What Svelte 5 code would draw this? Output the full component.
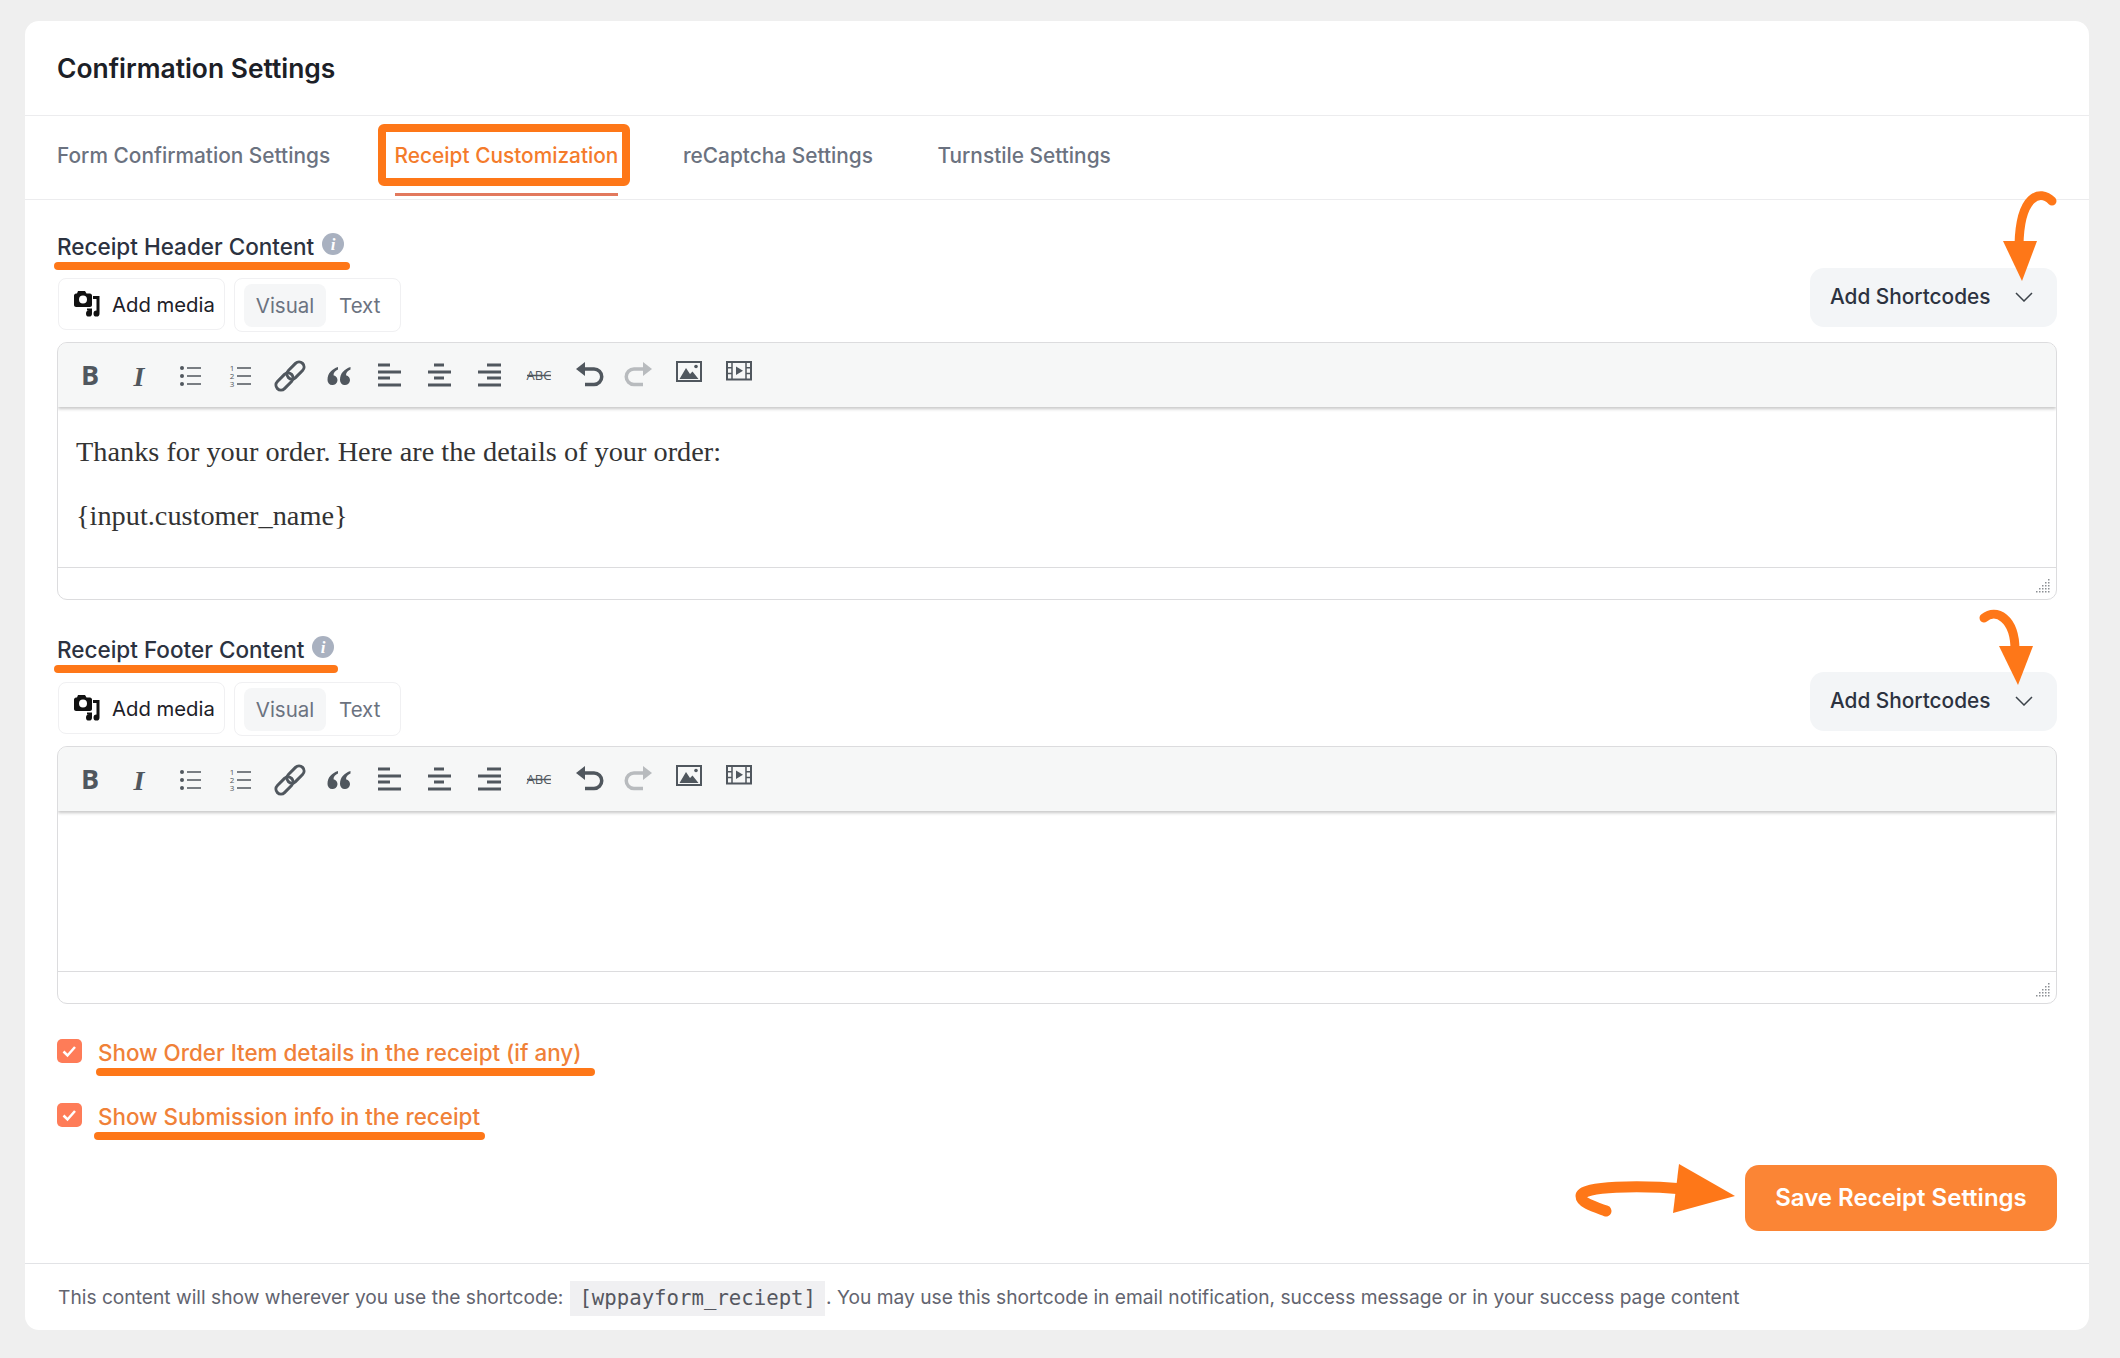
<script>
  const tabs = ["Form Confirmation Settings", "Receipt Customization", "reCaptcha Settings", "Turnstile Settings"];

  // little dotted triangle of the editor's resize handle
  const grip = [];
  for (let row = 0; row < 5; row++) {
    for (let col = 4 - row; col < 5; col++) {
      grip.push({ x: col * 3 + 1, y: row * 3 + 1 });
    }
  }
</script>

{#snippet toolbar()}
  <div class="toolbar">
    <span class="tool"><svg viewBox="0 0 32 32"><text x="16" y="25" text-anchor="middle" class="t-bold">B</text></svg></span>
    <span class="tool"><svg viewBox="0 0 32 32"><text x="15" y="26" text-anchor="middle" class="t-ital">I</text></svg></span>
    <span class="tool">
      <svg viewBox="0 0 32 32">
        <circle cx="8" cy="8" r="2" /><circle cx="8" cy="16" r="2" /><circle cx="8" cy="24" r="2" />
        <path class="line" d="M13 8H27M13 16H27M13 24H27" />
      </svg>
    </span>
    <span class="tool">
      <svg viewBox="0 0 32 32">
        <text x="8" y="11" text-anchor="middle" class="t-num">1</text>
        <text x="8" y="19" text-anchor="middle" class="t-num">2</text>
        <text x="8" y="27" text-anchor="middle" class="t-num">3</text>
        <path class="line" d="M13 8H27M13 16H27M13 24H27" />
      </svg>
    </span>
    <span class="tool">
      <svg viewBox="0 0 32 32">
        <g class="chain">
          <rect x="16.500" y="0.500" width="10" height="20" rx="5" transform="rotate(45 21.500 10.500)" />
          <rect x="5.500" y="11.500" width="10" height="20" rx="5" transform="rotate(45 10.500 21.500)" />
        </g>
      </svg>
    </span>
    <span class="tool">
      <svg viewBox="0 0 32 32">
        <path d="M15 7C9 9 4.5 13 4.5 20A5 5 0 1 0 10.5 15.2C10.5 12.5 12.5 10.5 15 9.5Z" />
        <path d="M15 7C9 9 4.5 13 4.5 20A5 5 0 1 0 10.5 15.2C10.5 12.5 12.5 10.5 15 9.5Z" transform="translate(12.5 0)" />
      </svg>
    </span>
    <span class="tool">
      <svg viewBox="0 0 32 32"><path d="M5 3.500H17V6.500H5ZM5 10.500H28V13.500H5ZM5 16.500H17V19.500H5ZM5 23.500H28V26.500H5Z" /></svg>
    </span>
    <span class="tool">
      <svg viewBox="0 0 32 32"><path d="M11 3.500H21V6.500H11ZM5 10.500H28V13.500H5ZM11 16.500H21V19.500H11ZM5 23.500H28V26.500H5Z" /></svg>
    </span>
    <span class="tool">
      <svg viewBox="0 0 32 32"><path d="M14 3.500H28V6.500H14ZM5 10.500H28V13.500H5ZM14 16.500H28V19.500H14ZM5 23.500H28V26.500H5Z" /></svg>
    </span>
    <span class="tool">
      <svg viewBox="0 0 32 32">
        <text x="16" y="20" text-anchor="middle" class="t-abc">ABC</text>
        <path class="line" d="M4 15.500H28" />
      </svg>
    </span>
    <span class="tool">
      <svg viewBox="0 0 32 32">
        <path d="M3 9L12 2V16Z" />
        <path class="thick" d="M11 9H21a7.750 7.750 0 0 1 0 15.500H12" />
      </svg>
    </span>
    <span class="tool off">
      <svg viewBox="0 0 32 32">
        <g transform="translate(32 0) scale(-1 1)">
          <path d="M3 9L12 2V16Z" />
          <path class="thick" d="M11 9H21a7.750 7.750 0 0 1 0 15.500H12" />
        </g>
      </svg>
    </span>
    <span class="tool">
      <svg viewBox="0 0 32 32">
        <rect class="frame" x="4" y="2" width="24" height="19" />
        <path d="M6.500 19L13 8L17 14L19.500 11.500L25.500 19Z" />
        <circle cx="23" cy="6.500" r="1.800" />
      </svg>
    </span>
    <span class="tool">
      <svg viewBox="0 0 32 32">
        <rect class="frame" x="4" y="2" width="24" height="17.500" />
        <path class="line" d="M9 2V19M23 2V19M4 7.800H9M4 13.600H9M23 7.800H28M23 13.600H28" />
        <path d="M13 6.500L20 10.800L13 15Z" />
      </svg>
    </span>
  </div>
{/snippet}

{#snippet infoIcon()}
  <svg class="info" viewBox="0 0 22 22">
    <circle cx="11" cy="11" r="11" />
    <text x="11" y="17" text-anchor="middle">i</text>
  </svg>
{/snippet}

{#snippet editorHead(label)}
  <div class="editor-head">
    <div>
      <div class="label">{label} {@render infoIcon()}</div>
      <div class="media-row">
        <button class="media">
          <svg class="media-icon" viewBox="0 0 26 26">
            <path fill-rule="evenodd" d="M4 0H11L12.500 2.500H16C17 2.500 18 3.500 18 4.500V14C18 15 17 16 16 16H2C1 16 0 15 0 14V4.500C0 3.500 1 2.500 2 2.500H3ZM9 4.500A4 4 0 1 0 9 12.500A4 4 0 0 0 9 4.500Z" />
            <path d="M19 5H25.500V22.500A3 3 0 1 1 22.500 19.600V8H19Z" />
            <path d="M13 17.500H18V22.500A3 3 0 1 1 15 19.600V19.500H13Z" />
          </svg>
          Add media
        </button>
        <div class="switch">
          <span class="chip">Visual</span>
          <span class="plain">Text</span>
        </div>
      </div>
    </div>
    <button class="shortcodes">
      <span class="shortcodes-label">Add Shortcodes</span>
      <svg class="chevron" viewBox="0 0 18 10"><path d="M1 1L9 9L17 1" /></svg>
    </button>
  </div>
{/snippet}

{#snippet resizer()}
  <div class="status">
    <svg class="grip" viewBox="0 0 15 15">
      {#each grip as dot}
        <rect x={dot.x} y={dot.y} width="1.500" height="1.500" />
      {/each}
    </svg>
  </div>
{/snippet}

<div class="page">
  <div class="card">
    <h2 class="title">Confirmation Settings</h2>

    <nav class="tabs">
      {#each tabs as tab, i}
        <span class="tab" class:active={i === 1}>{tab}</span>
      {/each}
    </nav>

    <section class="section">
      {@render editorHead("Receipt Header Content")}
      <div class="editor">
        {@render toolbar()}
        <div class="body">
          <p>Thanks for your order. Here are the details of your order:</p>
          <p>{"{input.customer_name}"}</p>
        </div>
        {@render resizer()}
      </div>
    </section>

    <section class="section second">
      {@render editorHead("Receipt Footer Content")}
      <div class="editor">
        {@render toolbar()}
        <div class="body"></div>
        {@render resizer()}
      </div>
    </section>

    <div class="checks">
      <div class="check">
        <span class="box"><svg viewBox="0 0 24 24"><path d="M6.500 12.500L10.500 16.500L18 8" /></svg></span>
        <span>Show Order Item details in the receipt (if any)</span>
      </div>
      <div class="check">
        <span class="box"><svg viewBox="0 0 24 24"><path d="M6.500 12.500L10.500 16.500L18 8" /></svg></span>
        <span>Show Submission info in the receipt</span>
      </div>
    </div>

    <div class="actions">
      <button class="save">Save Receipt Settings</button>
    </div>

    <footer class="foot">
      <span>This content will show wherever you use the shortcode:</span>
      <code>[wppayform_reciept]</code>
      <span>. You may use this shortcode in email notification, success message or in your success page content</span>
    </footer>
  </div>

  <!-- hand drawn annotations on top of the screenshot -->
  <svg class="marks" viewBox="0 0 2120 1358">
    <rect class="box-mark" x="382" y="128" width="244" height="54" rx="2" />

    <rect x="54" y="262" width="296" height="8" rx="4" />
    <rect x="54" y="665" width="284" height="8" rx="4" />
    <rect x="96" y="1068" width="499" height="8" rx="4" />
    <rect x="94" y="1132" width="391" height="8" rx="4" />

    <path class="stroke" d="M2052 201C2040 189 2020 195 2019 245" stroke-width="9" />
    <path d="M2003 241H2037L2022 281Z" />

    <path class="stroke" d="M1984 618C1996 608 2015 618 2015 650" stroke-width="9" />
    <path d="M1999 646H2033L2018 685Z" />

    <path class="stroke" d="M1606 1211C1595 1207 1581 1203 1581 1196C1581 1186 1640 1185 1684 1189" stroke-width="11" />
    <path d="M1679 1164L1735 1196L1673 1213Z" />
  </svg>
</div>

<style>
  :global(body) {
    margin: 0;
    background: #efefef;
    font-family: Inter, "Liberation Sans", sans-serif;
  }

  .page {
    position: relative;
    width: 2120px;
    height: 1358px;
    padding: 21px 31px 0 25px;
    box-sizing: border-box;
  }

  .card {
    background: #fff;
    border-radius: 14px;
    height: 1309px;
    overflow: hidden;
  }

  .title {
    margin: 0;
    height: 93px;
    padding: 0 32px 1px;
    display: flex;
    align-items: center;
    font-size: 26.400px;
    font-weight: 600;
    color: #1c2027;
    border-bottom: 1px solid #ececee;
  }

  .tabs {
    display: flex;
    gap: 64.500px;
    height: 83px;
    padding: 0 32px;
    border-bottom: 1px solid #ececee;
  }

  .tab {
    display: flex;
    align-items: center;
    height: 75px;
    padding: 2px 0 3px;
    font-size: 20.850px;
    font-weight: 500;
    color: #6b7280;
  }

  .tab.active {
    color: #f47b2b;
    border-bottom: 3px solid #e2795d;
    padding-bottom: 0;
  }

  .section {
    padding: 32px 32px 0;
  }

  .section.second {
    padding-top: 35px;
  }

  .section.second .label {
    margin-bottom: 19px;
  }

  .editor-head {
    display: flex;
    justify-content: space-between;
    align-items: flex-end;
    margin-bottom: 10px;
  }

  .label {
    display: flex;
    align-items: center;
    gap: 8px;
    height: 28px;
    font-size: 22.500px;
    font-weight: 500;
    color: #2c3240;
    margin-bottom: 18px;
  }

  .info {
    width: 22px;
    height: 22px;
    margin-top: -4px;
    fill: #a9b1c0;
  }

  .info text {
    fill: #fff;
    font-family: "Liberation Serif", serif;
    font-style: italic;
    font-weight: 700;
    font-size: 17px;
  }

  .media-row {
    display: flex;
    align-items: flex-start;
    gap: 9px;
    margin-left: 1px;
  }

  .media {
    display: flex;
    align-items: center;
    gap: 12px;
    height: 52px;
    width: 167px;
    padding: 0 0 0 15px;
    box-sizing: border-box;
    background: #fff;
    border: 1px solid #f0f0f2;
    border-radius: 8px;
    font-family: inherit;
    font-size: 20.300px;
    color: #1c2027;
  }

  .media-icon {
    width: 26px;
    height: 26px;
    fill: #111;
    flex: none;
  }

  .switch {
    display: flex;
    align-items: center;
    height: 54px;
    width: 167px;
    box-sizing: border-box;
    padding: 0 9px;
    border: 1px solid #f0f0f2;
    border-radius: 8px;
    font-size: 20.500px;
    color: #6b7280;
  }

  .chip {
    display: flex;
    align-items: center;
    justify-content: center;
    width: 82px;
    height: 43px;
    background: #f5f6f7;
    border-radius: 8px;
  }

  .plain {
    margin-left: 13px;
  }

  .shortcodes {
    display: flex;
    align-items: center;
    justify-content: space-between;
    width: 247px;
    height: 59px;
    margin-bottom: 5px;
    padding: 0 24px 2px 20px;
    box-sizing: border-box;
    border: none;
    border-radius: 14px;
    background: #f3f5f7;
    font-family: inherit;
    font-size: 20.800px;
    font-weight: 500;
    color: #2c3240;
  }

  .chevron {
    width: 18px;
    height: 10px;
    fill: none;
    stroke: #3c434a;
    stroke-width: 1.500;
  }

  .editor {
    height: 258px;
    box-sizing: border-box;
    border: 1px solid #dcdcde;
    border-radius: 10px;
    overflow: hidden;
    display: flex;
    flex-direction: column;
  }

  .toolbar {
    display: flex;
    align-items: flex-start;
    flex: none;
    height: 64px;
    box-sizing: border-box;
    padding: 17px 0 0 7px;
    background: #f6f7f7;
    box-shadow: 0 2px 3px rgba(0, 0, 0, 0.22);
    position: relative;
  }

  .tool {
    flex: none;
    width: 49.900px;
    height: 32px;
    display: flex;
    justify-content: center;
  }

  .tool svg {
    width: 32px;
    height: 32px;
    fill: #50575e;
    overflow: visible;
  }

  .tool.off svg {
    fill: #b8bbbe;
  }

  .tool.off .thick {
    stroke: #b8bbbe;
  }

  .line {
    fill: none;
    stroke: #50575e;
    stroke-width: 1.500;
  }

  .thick {
    fill: none;
    stroke: #50575e;
    stroke-width: 3.500;
  }

  .frame {
    fill: none;
    stroke: #50575e;
    stroke-width: 2;
  }

  .chain rect {
    fill: none;
    stroke: #50575e;
    stroke-width: 3;
  }

  .t-bold {
    font-family: "Open Sans", sans-serif;
    font-weight: 700;
    font-size: 27px;
  }

  .t-ital {
    font-family: "Liberation Serif", serif;
    font-weight: 700;
    font-style: italic;
    font-size: 28px;
  }

  .t-num {
    font-family: "Open Sans", sans-serif;
    font-size: 8px;
  }

  .t-abc {
    font-family: "Open Sans", sans-serif;
    font-size: 13px;
  }

  .body {
    flex: 1;
    padding: 26px 18px 0;
    font-family: "Liberation Serif", serif;
    font-size: 28.300px;
    color: #333;
  }

  .body p {
    margin: 0 0 26px;
    line-height: 38px;
  }

  .status {
    flex: none;
    height: 32px;
    box-sizing: border-box;
    border-top: 1px solid #dcdcde;
    display: flex;
    justify-content: flex-end;
    align-items: flex-end;
    padding: 0 6px 6px 0;
  }

  .grip {
    width: 15px;
    height: 15px;
    fill: #8c8f94;
  }

  .checks {
    display: flex;
    flex-direction: column;
    gap: 36px;
    margin-top: 35px;
    padding: 0 32px;
  }

  .check {
    display: flex;
    gap: 16px;
    height: 28px;
    line-height: 28px;
    font-size: 22.400px;
    font-weight: 500;
    color: #f08138;
  }

  .box {
    flex: none;
    width: 25px;
    height: 24px;
    border-radius: 5px;
    background: #fe7c58;
  }

  .box svg {
    display: block;
    width: 24px;
    height: 24px;
    fill: none;
    stroke: #fff;
    stroke-width: 2.500;
  }

  .actions {
    display: flex;
    justify-content: flex-end;
    margin-top: 34px;
    padding: 0 32px 32px 0;
    border-bottom: 1px solid #e2e3e6;
  }

  .save {
    width: 312px;
    height: 66px;
    padding: 0 0 2px;
    border: none;
    border-radius: 14px;
    background: #fb8535;
    color: #fff;
    font-family: inherit;
    font-size: 24px;
    font-weight: 600;
  }

  .foot {
    display: flex;
    align-items: center;
    height: 66px;
    padding: 0 33px;
    font-size: 19.200px;
    color: #62646f;
    white-space: nowrap;
  }

  code {
    display: block;
    height: 35px;
    line-height: 35px;
    padding: 0 9px;
    margin: 2px 1px 0 7px;
    background: #f0f0f2;
    font-family: "DejaVu Sans Mono", monospace;
    font-size: 20.700px;
    color: #55575f;
  }

  .marks {
    position: absolute;
    left: 0;
    top: 0;
    width: 2120px;
    height: 1358px;
    fill: #fe7718;
    pointer-events: none;
  }

  .box-mark {
    fill: none;
    stroke: #fe7718;
    stroke-width: 8;
  }

  .stroke {
    fill: none;
    stroke: #fe7718;
    stroke-linecap: round;
  }
</style>
